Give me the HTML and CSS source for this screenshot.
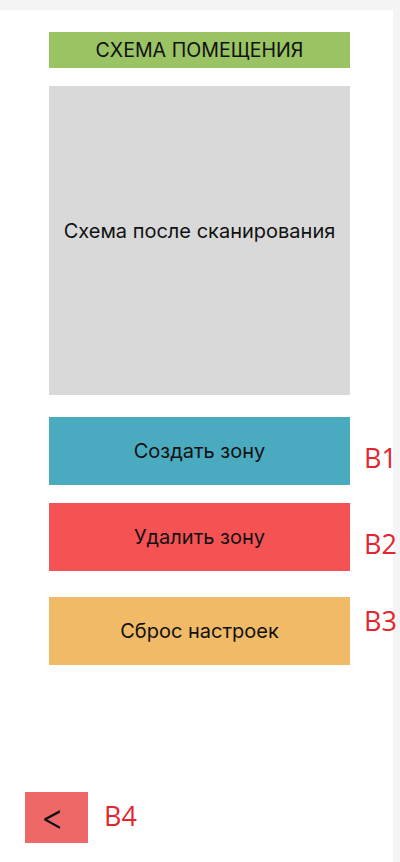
FILE: index.html
```html
<!DOCTYPE html>
<html lang="ru">
<head>
<meta charset="utf-8">
<title>Схема помещения</title>
<link rel="stylesheet" href="styles.css">
</head>
<body>
<div class="panel">
  <div class="content">
    <div class="header">СХЕМА ПОМЕЩЕНИЯ</div>
    <div class="scheme">Схема после сканирования</div>
    <div class="row row-b1">
      <div class="btn btn-create">Создать зону</div>
      <span class="tag tag-b1">B1</span>
    </div>
    <div class="row row-b2">
      <div class="btn btn-delete">Удалить зону</div>
      <span class="tag tag-b2">B2</span>
    </div>
    <div class="row row-b3">
      <div class="btn btn-reset">Сброс настроек</div>
      <span class="tag tag-b3">B3</span>
    </div>
  </div>
  <div class="back-row">
    <div class="back">&lt;</div>
    <span class="tag tag-b4">B4</span>
  </div>
</div>
</body>
</html>
```

FILE: styles.css
```css
html, body {
  margin: 0;
  padding: 0;
}
body {
  background: #f4f4f4;
  font-family: Inter, "Noto Sans", sans-serif;
  color: #111;
}
.panel {
  margin-top: 10px;
  width: 393px;
  height: 852px;
  background: #fff;
  display: flex;
  flex-direction: column;
  box-sizing: border-box;
}
.content {
  padding: 22px 0 0 49px;
  display: flex;
  flex-direction: column;
}
.header {
  width: 301px;
  height: 36px;
  background: #9ac364;
  display: flex;
  align-items: center;
  justify-content: center;
  font-size: 19.6px;
}
.scheme {
  margin-top: 18px;
  width: 301px;
  height: 309px;
  background: #d9d9d9;
  display: flex;
  align-items: center;
  justify-content: center;
  font-size: 20px;
  padding-bottom: 20px;
  box-sizing: border-box;
}
.row {
  display: flex;
  align-items: flex-start;
  gap: 14px;
}
.row-b1 { margin-top: 22px; }
.row-b2 { margin-top: 18px; }
.row-b3 { margin-top: 26px; }
.btn {
  width: 301px;
  height: 68px;
  display: flex;
  align-items: center;
  justify-content: center;
  font-size: 20px;
  flex: none;
}
.btn-create { background: #4aaac0; }
.btn-delete { background: #f55253; }
.btn-reset { background: #f0ba67; }
.tag {
  font-family: "Open Sans", "Noto Sans", sans-serif;
  font-size: 27px;
  line-height: 27px;
  color: #e4252d;
}
.tag-b1 { margin-top: 27px; }
.tag-b2 { margin-top: 27px; }
.tag-b3 { margin-top: 10px; }
.back-row {
  margin-top: 127px;
  padding-left: 25px;
  display: flex;
  align-items: flex-start;
  gap: 16px;
}
.back {
  width: 63px;
  height: 51px;
  background: #ef6868;
  display: flex;
  align-items: center;
  justify-content: center;
  font-size: 36px;
  font-weight: 300;
  padding-right: 8px;
  padding-bottom: 2px;
  box-sizing: border-box;
}
.tag-b4 { margin-top: 10px; }
```
